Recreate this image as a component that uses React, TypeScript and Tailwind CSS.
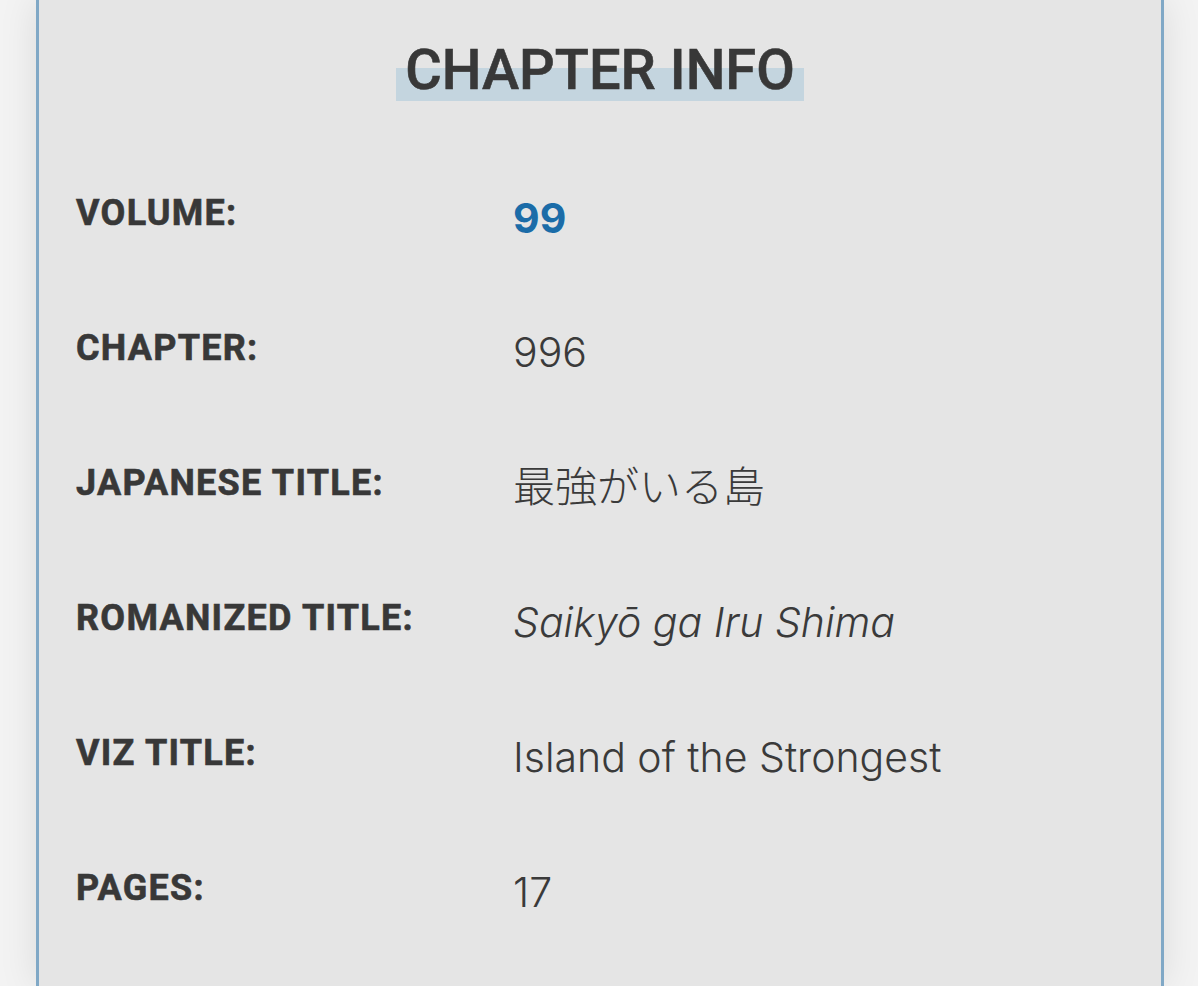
const rows: { label: string; value: string; kind?: 'link' | 'jp' | 'italic' }[] = [
  { label: 'VOLUME:', value: '99', kind: 'link' },
  { label: 'CHAPTER:', value: '996' },
  { label: 'JAPANESE TITLE:', value: '最強がいる島', kind: 'jp' },
  { label: 'ROMANIZED TITLE:', value: 'Saikyō ga Iru Shima', kind: 'italic' },
  { label: 'VIZ TITLE:', value: 'Island of the Strongest' },
  { label: 'PAGES:', value: '17' },
];

function InfoRow({ label, value, kind }: { label: string; value: string; kind?: string }) {
  let valueClass = "font-['Inter',sans-serif] font-light text-[41px] leading-none text-[#3a3a3a] mt-[2px]";
  if (kind === 'link') {
    valueClass = "font-['Inter',sans-serif] font-bold text-[41px] leading-none text-[#1b6ca8] mt-[3px]";
  } else if (kind === 'jp') {
    valueClass = "font-['Inter','Noto_Sans_CJK_JP',sans-serif] font-light text-[42px] leading-none text-[#3a3a3a] mt-[1px]";
  } else if (kind === 'italic') {
    valueClass = "font-['Inter',sans-serif] font-light italic text-[41px] leading-none text-[#3a3a3a] mt-[2px]";
  }
  return (
    <div className="flex items-start h-[135px]">
      <div className="w-[437px] shrink-0 font-['Roboto',sans-serif] font-bold text-[36px] leading-none tracking-[0.035em] text-[#383838] [-webkit-text-stroke:0.6px_#383838]">
        {label}
      </div>
      <div className={valueClass}>{value}</div>
    </div>
  );
}

export default function App() {
  return (
    <div className="w-[1198px] h-[986px] overflow-hidden bg-[#f3f3f3] pl-[36px] pr-[34px]">
      <div className="h-full bg-[#e5e5e5] border-x-[3px] border-[#80a8c6] shadow-[0_0_36px_rgba(0,0,0,0.1)] pt-[42px] pl-[37px]">
        {/* Título */}
        <div className="flex justify-center pr-[37px]">
          <h2 className="inline-block px-[9px] pb-[2px] font-['Roboto',sans-serif] font-medium text-[56px] leading-[57px] text-[#383838] [-webkit-text-stroke:0.6px_#383838] bg-[linear-gradient(to_bottom,transparent_26px,#c4d5df_26px)]">
            CHAPTER INFO
          </h2>
        </div>

        {/* Linhas de informação */}
        <div className="mt-[94px] flex flex-col">
          {rows.map((r) => (
            <InfoRow key={r.label} label={r.label} value={r.value} kind={r.kind} />
          ))}
        </div>
      </div>
    </div>
  );
}
